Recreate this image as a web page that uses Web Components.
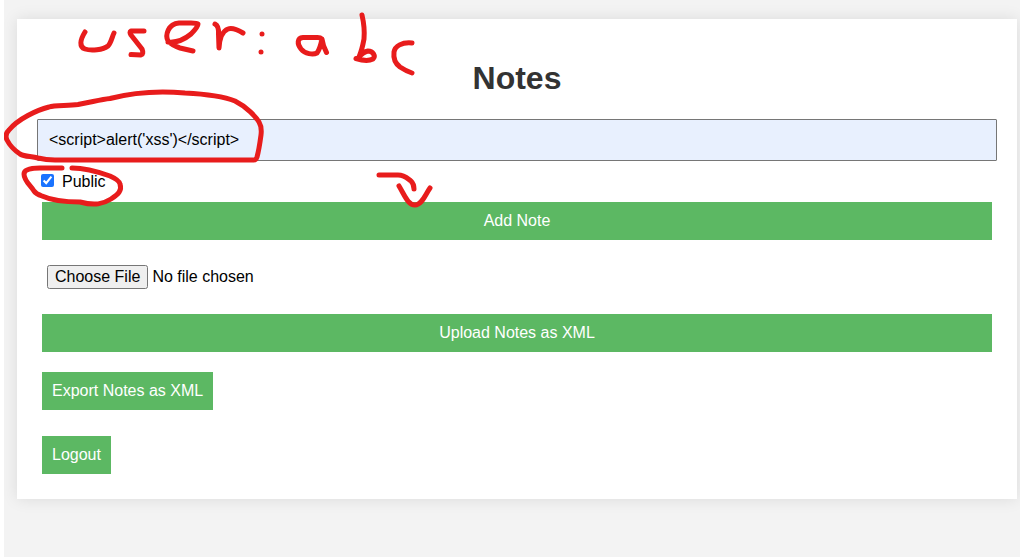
<!DOCTYPE html>
<html lang="en">
<head>
<meta charset="utf-8">
<title>Notes</title>
<style>
html { background: #fff; }
body { margin: 0 0 0 4px; font-family: Arial, "Liberation Sans", sans-serif; font-size: 16px; line-height: 18px; color: #000; }
</style>
</head>
<body>
<notes-page>
  <note-card heading="Notes">
    <note-entry></note-entry>
    <action-button wide>Add Note</action-button>
    <note-upload></note-upload>
    <action-button wide>Upload Notes as XML</action-button>
    <action-button class="export">Export Notes as XML</action-button>
    <action-button class="logout">Logout</action-button>
  </note-card>
  <pen-marks slot="overlay"></pen-marks>
</notes-page>
<script>
function define(name, html) {
  const template = document.createElement('template');
  template.innerHTML = html;
  customElements.define(name, class extends HTMLElement {
    constructor() {
      super();
      this.attachShadow({ mode: 'open' }).append(template.content.cloneNode(true));
    }
    connectedCallback() {
      const h = this.shadowRoot.querySelector('h1');
      if (h) h.textContent = this.getAttribute('heading');
    }
  });
}

define('notes-page', `
  <style>
    :host { display: block; position: relative; box-sizing: border-box; min-height: 100vh; padding: 19px 3px 19px 13px; background: #f3f3f3; overflow: hidden; }
  </style>
  <main><slot></slot></main>
  <slot name="overlay"></slot>`);

define('note-card', `
  <style>
    :host { display: block; padding: 20px 20px 25px; background: #fff; box-shadow: 0 0 15px rgba(0, 0, 0, .1); }
    h1 { margin: 20px 0 22px; text-align: center; font-size: 32px; line-height: 38px; color: #333; }
    .stack { display: flex; flex-direction: column; }
    ::slotted(action-button) { margin: 0 5px; }
    ::slotted(.export) { margin-top: 20px; }
    ::slotted(.logout) { margin-top: 26px; }
  </style>
  <h1></h1>
  <div class="stack"><slot></slot></div>`);

define('note-entry', `
  <style>
    :host { display: block; }
    .text { display: block; box-sizing: border-box; width: 100%; height: 42px; padding: 10px 11px; border: 1px solid #767676; border-radius: 1px; background: #e8f0fe; color: #000; font: inherit; outline: none; }
    .public { display: flex; align-items: center; height: 41px; padding-left: 4px; gap: 8px; }
    .public input { width: 13px; height: 13px; margin: 0 0 2px; accent-color: #1a73ff; }
  </style>
  <input class="text" type="text" aria-label="Note" value="&lt;script&gt;alert('xss')&lt;/script&gt;">
  <div class="public"><input id="public" type="checkbox" checked><label for="public">Public</label></div>`);

define('note-upload', `
  <style>
    :host { display: block; padding: 25px 10px; }
    input { display: block; width: 100%; height: 24px; font: inherit; color: #000; }
  </style>
  <input type="file" aria-label="Notes file">`);

define('action-button', `
  <style>
    :host { display: block; align-self: flex-start; }
    :host([wide]) { align-self: stretch; }
    button { display: block; width: 100%; padding: 10px; border: 0; background: #5cb863; color: #fff; font: inherit; cursor: pointer; }
  </style>
  <button type="button"><slot></slot></button>`);

define('pen-marks', `
  <style>
    :host { display: block; position: absolute; top: 0; left: -4px; pointer-events: none; }
    svg { display: block; fill: none; stroke: #e81c1c; stroke-width: 5; stroke-linecap: round; stroke-linejoin: round; }
  </style>
  <svg width="440" height="220" viewBox="0 0 440 220" aria-hidden="true">
    <g>
      <path d="M85 32C80 40 79 47 85 49C91 51 103 50 108 46C111 43 112 37 114 33"/>
      <path d="M144 31H131Q129 32 131 35L142 49Q144 54 141 55L131 54.500"/>
      <path d="M168 42C178 43 185 39 191 34Q198 27 198 24Q197 23 191 23H179C168 24 165 35 168 41Q173 46 180 48L193 51"/>
      <path d="M215 24Q219 26 218.500 34L219 48Q220 32 228 29Q233 27 243 33"/>
      <path d="M322 39Q320 37 316 37.500H303C297 38 297 44 301 49C305 54 313 55 317 53Q320 49 322 39Q323 46 326.500 52.500"/>
      <path d="M362 15Q365 28 364 39Q362 50 359 57Q363 52 368 51C373 51 376 56 373 59Q367 62 356 58.500"/>
      <path d="M412 43C402 42 395 46 394 52C393 60 396 64 400 67Q406 71 412 73"/>
    </g>
    <g fill="#e81c1c" stroke="none"><circle cx="262" cy="34" r="2.500"/><circle cx="261" cy="52" r="2.500"/></g>
    <path d="M254 160H55C47 160 42 159 38 158C31 156 25 157 20 154C14 150 9 144 7 140C5 136 6 133 9 130C18 119 37 110 49 107C55 105 68 106 78 104.500L93 101.500Q105 99 110 98.500C135 92 163 91 185 93C205 94 225 97 235 101C247 107 256 117 259 122Q262 127 261 135Q259 150 257 157Q256 160 254 160Z"/>
    <path d="M62 168H40C29 168 24 170 24 174C24 181 31 186 34 191Q36 194 42 196C53 201 69 202 80 202C95 206 103 204 111 199C119 194 122 190 120 184Q119 180 110 176C96 171 84 168 72 168"/>
    <path d="M379 175H398C405 175 408 179 411 181C414 184 414 186 414 189M399 186C405 196 408 205 415 205C422 205 425 195 430 188"/>
  </svg>`);
</script>
</body>
</html>
